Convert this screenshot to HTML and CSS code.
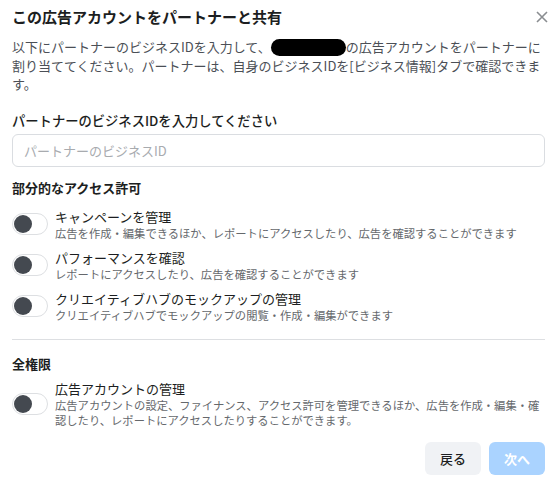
FILE: index.html
```html
<!DOCTYPE html>
<html lang="ja">
<head>
<meta charset="utf-8">
<link rel="stylesheet" href="styles.css">
</head>
<body>
<div class="dialog">
  <div class="header">
    <h1 class="title">この広告アカウントをパートナーと共有</h1>
    <span class="close">
      <svg width="12" height="12" viewBox="0 0 12 12"><path d="M1 1 L11 11 M11 1 L1 11" stroke="#8a8d91" stroke-width="1.6" fill="none"/></svg>
    </span>
  </div>
  <p class="desc">以下にパートナーのビジネスIDを入力して、<span class="redact"></span>の広告アカウントをパートナーに<br>割り当ててください。パートナーは、自身のビジネスIDを[ビジネス情報]タブで確認できま<br>す。</p>
  <div class="label">パートナーのビジネスIDを入力してください</div>
  <div class="input"><span class="placeholder">パートナーのビジネスID</span></div>
  <div class="section">部分的なアクセス許可</div>
  <div class="rows">
    <div class="row">
      <span class="toggle"><span class="knob"></span></span>
      <div class="text">
        <div class="row-title">キャンペーンを管理</div>
        <div class="row-desc">広告を作成・編集できるほか、レポートにアクセスしたり、広告を確認することができます</div>
      </div>
    </div>
    <div class="row">
      <span class="toggle"><span class="knob"></span></span>
      <div class="text">
        <div class="row-title">パフォーマンスを確認</div>
        <div class="row-desc">レポートにアクセスしたり、広告を確認することができます</div>
      </div>
    </div>
    <div class="row">
      <span class="toggle"><span class="knob"></span></span>
      <div class="text">
        <div class="row-title">クリエイティブハブのモックアップの管理</div>
        <div class="row-desc">クリエイティブハブでモックアップの閲覧・作成・編集ができます</div>
      </div>
    </div>
  </div>
  <hr class="divider">
  <div class="section full">全権限</div>
  <div class="row full-row">
    <span class="toggle"><span class="knob"></span></span>
    <div class="text">
      <div class="row-title">広告アカウントの管理</div>
      <div class="row-desc">広告アカウントの設定、ファイナンス、アクセス許可を管理できるほか、広告を作成・編集・確<br>認したり、レポートにアクセスしたりすることができます。</div>
    </div>
  </div>
  <div class="footer">
    <button class="btn back">戻る</button>
    <button class="btn next">次へ</button>
  </div>
</div>
</body>
</html>
```
FILE: styles.css
```css
* { box-sizing: border-box; }
html, body { margin: 0; padding: 0; background: #fff; }
body {
  font-family: "Noto Sans CJK JP", "Noto Sans", sans-serif;
  color: #1c1e21;
  width: 558px;
  height: 485px;
  overflow: hidden;
}
.dialog { padding: 0 13px 0 12px; }
.header {
  display: flex;
  align-items: center;
  justify-content: space-between;
  height: 36px;
}
.title {
  margin: 0;
  font-size: 15px;
  font-weight: 700;
  line-height: 20px;
  color: #1c1e21;
  margin-top: -2px;
}
.close {
  display: flex;
  margin-right: -3px;
  margin-top: -2px;
}
.desc {
  margin: 2px 0 0;
  font-size: 13px;
  line-height: 18.5px;
  color: #4b4f56;
}
.redact {
  display: inline-block;
  width: 75px;
  height: 17px;
  background: #000;
  border-radius: 9px;
  vertical-align: -4px;
}
.label {
  margin-top: 18px;
  font-size: 13.3px;
  font-weight: 500;
  line-height: 18px;
  color: #1c1e21;
}
.input {
  margin-top: 4px;
  height: 33px;
  border: 1px solid #dadde1;
  border-radius: 6px;
  padding-left: 11px;
  display: flex;
  align-items: center;
}
.placeholder {
  font-size: 13px;
  color: #a8abaf;
}
.section {
  margin-top: 12px;
  font-size: 13px;
  font-weight: 700;
  line-height: 18px;
  color: #1c1e21;
}
.rows {
  margin-top: 11px;
  display: flex;
  flex-direction: column;
  gap: 8px;
}
.row {
  display: flex;
  align-items: center;
  gap: 7px;
}
.toggle {
  flex: none;
  width: 36px;
  height: 22px;
  border: 1px solid #dddfe2;
  border-radius: 11px;
  background: #fff;
  display: flex;
  align-items: center;
  padding-left: 1px;
}
.knob {
  width: 18px;
  height: 18px;
  border-radius: 50%;
  background: #444950;
}
.row-title {
  font-size: 13px;
  line-height: 18px;
  color: #1c1e21;
}
.row-desc {
  font-size: 11.3px;
  line-height: 15px;
  color: #65686c;
}
.divider {
  margin: 16px 0 0;
  border: 0;
  border-top: 1px solid #dddfe2;
  height: 0;
}
.section.full { margin-top: 15px; }
.full-row { margin-top: 7px; }
.footer {
  margin-top: 14px;
  display: flex;
  justify-content: flex-end;
  gap: 8px;
}
.btn {
  width: 56px;
  height: 33px;
  border: 0;
  border-radius: 6px;
  font-family: "Noto Sans CJK JP", sans-serif;
  font-size: 13px;
  font-weight: 700;
  padding: 0;
}
.back { background: #f0f2f5; color: #1c1e21; font-weight: 500; }
.next { background: #aad3ff; color: #fff; }
```
